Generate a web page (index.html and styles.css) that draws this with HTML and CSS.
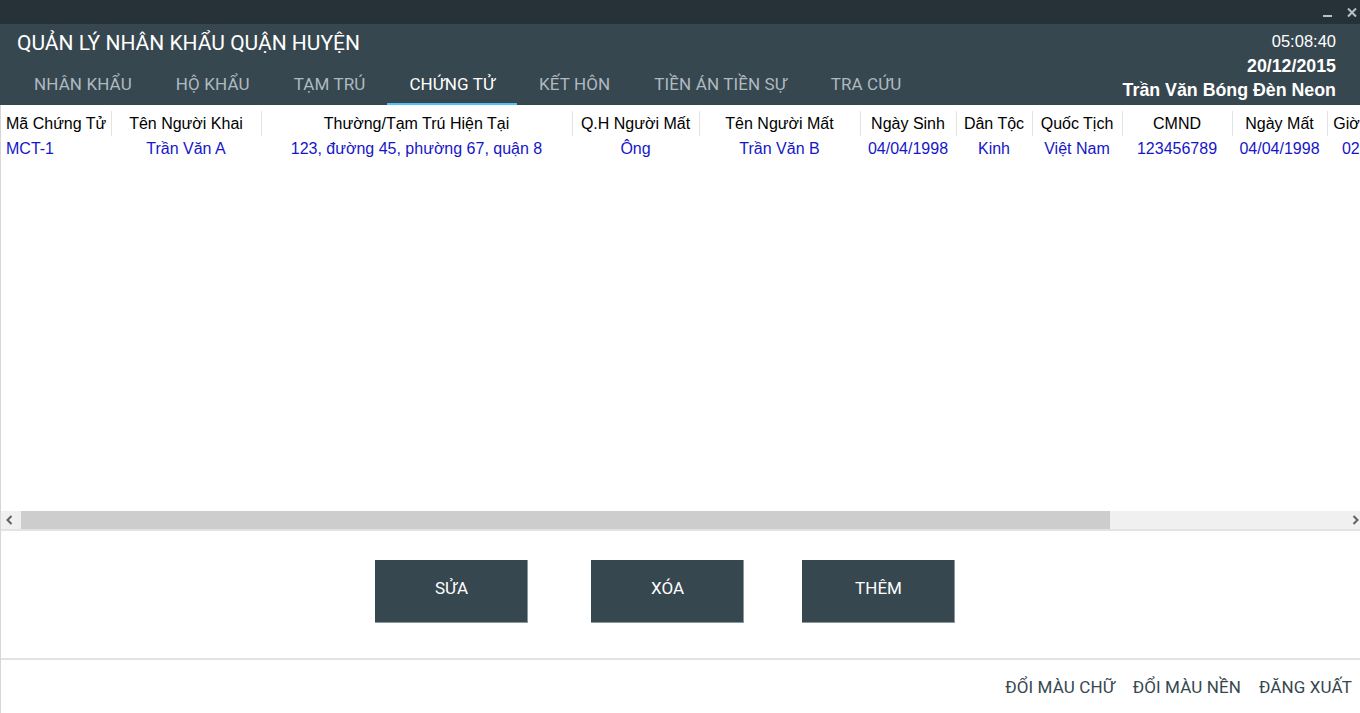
FILE: index.html
```html
<!DOCTYPE html>
<html lang="vi">
<head>
<meta charset="utf-8">
<title>Quản lý nhân khẩu quận huyện</title>
<link rel="stylesheet" href="styles.css">
</head>
<body>
<div class="app">
  <div class="titlebar">
    <svg class="win-btn" width="10" height="10" viewBox="0 0 10 10"><rect x="0" y="7" width="9" height="2" fill="#b9c3c7"/></svg>
    <svg class="win-btn" width="10" height="10" viewBox="0 0 10 10"><path d="M1 0.5 L9 8.5 M9 0.5 L1 8.5" stroke="#b9c3c7" stroke-width="2" fill="none"/></svg>
  </div>
  <header class="header">
    <div class="brand">
      <h1 class="title">QUẢN LÝ NHÂN KHẨU QUẬN HUYỆN</h1>
      <nav class="tabs">
        <span class="tab">NHÂN KHẨU</span>
        <span class="tab">HỘ KHẨU</span>
        <span class="tab">TẠM TRÚ</span>
        <span class="tab active">CHỨNG TỬ</span>
        <span class="tab">KẾT HÔN</span>
        <span class="tab">TIỀN ÁN TIỀN SỰ</span>
        <span class="tab">TRA CỨU</span>
      </nav>
    </div>
    <div class="info">
      <div class="info-line">05:08:40</div>
      <div class="info-line bold">20/12/2015</div>
      <div class="info-line bold">Trần Văn Bóng Đèn Neon</div>
    </div>
  </header>
  <main class="content">
    <section class="grid">
      <div class="grid-view">
        <table class="table">
          <colgroup>
            <col class="w110"><col class="w150"><col class="w311"><col class="w127"><col class="w161"><col class="w96"><col class="w76"><col class="w90"><col class="w110"><col class="w95"><col class="w70"><col class="w120"><col class="w128">
          </colgroup>
          <thead>
            <tr>
              <th class="left">Mã Chứng Tử</th>
              <th>Tên Người Khai</th>
              <th>Thường/Tạm Trú Hiện Tại</th>
              <th>Q.H Người Mất</th>
              <th>Tên Người Mất</th>
              <th>Ngày Sinh</th>
              <th>Dân Tộc</th>
              <th>Quốc Tịch</th>
              <th>CMND</th>
              <th>Ngày Mất</th>
              <th>Giờ Mất</th>
              <th>Nơi Mất</th>
              <th>Nguyên Nhân</th>
            </tr>
          </thead>
          <tbody>
            <tr>
              <td class="left">MCT-1</td>
              <td>Trần Văn A</td>
              <td>123, đường 45, phường 67, quận 8</td>
              <td>Ông</td>
              <td>Trần Văn B</td>
              <td>04/04/1998</td>
              <td>Kinh</td>
              <td>Việt Nam</td>
              <td>123456789</td>
              <td>04/04/1998</td>
              <td>02:30</td>
              <td>Bệnh viện</td>
              <td>Bệnh</td>
            </tr>
          </tbody>
        </table>
      </div>
      <div class="hscroll">
        <div class="arrow">
          <svg width="20" height="18" viewBox="0 0 20 18"><polyline points="10.5,5 6.5,9 10.5,13" fill="none" stroke="#606060" stroke-width="2"/></svg>
        </div>
        <div class="track"><div class="thumb"></div></div>
        <div class="arrow">
          <svg width="20" height="18" viewBox="0 0 20 18"><polyline points="13.5,5 17.5,9 13.5,13" fill="none" stroke="#606060" stroke-width="2"/></svg>
        </div>
      </div>
    </section>
    <section class="actions">
      <button class="btn">SỬA</button>
      <button class="btn">XÓA</button>
      <button class="btn">THÊM</button>
    </section>
    <footer class="footer">
      <span class="link">ĐỔI MÀU CHỮ</span>
      <span class="link">ĐỔI MÀU NỀN</span>
      <span class="link">ĐĂNG XUẤT</span>
    </footer>
  </main>
</div>
</body>
</html>
```
FILE: styles.css
```css
* { box-sizing: border-box; }
html, body { margin: 0; padding: 0; }
body { width: 1360px; height: 713px; overflow: hidden; background: #fff; font-family: Roboto, "Noto Sans", sans-serif; }
.app { width: 1360px; height: 713px; display: flex; flex-direction: column; }

.titlebar { height: 24px; background: #263238; display: flex; justify-content: flex-end; align-items: center; gap: 14px; padding-right: 3px; }
.win-btn { display: block; margin-top: 1px; }

.header { height: 81px; background: #37474f; display: flex; justify-content: space-between; }
.brand { display: flex; flex-direction: column; padding: 7px 0 0 12px; }
.title { margin: 0 0 0 5px; font-family: Roboto, sans-serif; font-weight: 400; font-size: 21px; line-height: 24px; color: #ffffff; letter-spacing: 0; }
.tabs { margin-top: auto; display: flex; }
.tab { padding: 0 22px 9px; font-size: 17px; letter-spacing: 0.12px; line-height: 20px; color: #aebac0; border-bottom: 2px solid transparent; white-space: nowrap; }
.tab.active { color: #ffffff; border-bottom-color: #4fc3f7; }

.info { padding: 5px 24px 0 0; text-align: right; font-family: "Liberation Sans", Arial, sans-serif; font-size: 16.5px; line-height: 24.5px; color: #ffffff; }
.info-line.bold { font-weight: bold; font-size: 17.8px; }

.content { flex: 1; border-left: 1px solid #d6d6d6; display: flex; flex-direction: column; }

.grid { border-bottom: 2px solid #e3e3e3; }
.grid-view { height: 406px; overflow: hidden; padding-top: 6px; }
.table { border-collapse: collapse; table-layout: fixed; width: 1644px; font-family: "Liberation Sans", Arial, sans-serif; font-size: 16px; }
.w70 { width: 70px; } .w76 { width: 76px; } .w90 { width: 90px; } .w95 { width: 95px; } .w96 { width: 96px; }
.w110 { width: 110px; } .w120 { width: 120px; } .w127 { width: 127px; } .w128 { width: 128px; } .w150 { width: 150px; }
.w161 { width: 161px; } .w311 { width: 311px; }
.table th { height: 25px; padding: 0; font-weight: normal; color: #000; text-align: center; border-right: 1px solid #e3e3e3; white-space: nowrap; overflow: hidden; }
.table td { height: 26px; padding: 0; color: #1616c8; text-align: center; white-space: nowrap; overflow: hidden; }
.table .left { text-align: left; padding-left: 5px; }

.hscroll { height: 18px; display: flex; background: #f0f0f0; }
.arrow { width: 20px; flex: none; }
.arrow svg { display: block; }
.track { flex: 1; }
.thumb { width: 1089px; height: 18px; background: #cdcdcd; }

.actions { height: 127px; display: flex; gap: 63px; padding: 29px 0 0 374px; }
.btn { width: 153px; height: 63px; border: none; background: #37474f; color: #fff; font-family: Roboto, sans-serif; font-size: 17px; box-shadow: inset -1px -1px 0 #8a979c; padding: 0 0 7px; }
.btn:last-child { margin-left: -5px; }

.footer { flex: 1; border-top: 2px solid #e3e3e3; display: flex; justify-content: flex-end; gap: 18px; padding: 17px 8px 0 0; }
.link { font-size: 17px; letter-spacing: 0.12px; line-height: 20px; color: #37474f; white-space: nowrap; }
```
